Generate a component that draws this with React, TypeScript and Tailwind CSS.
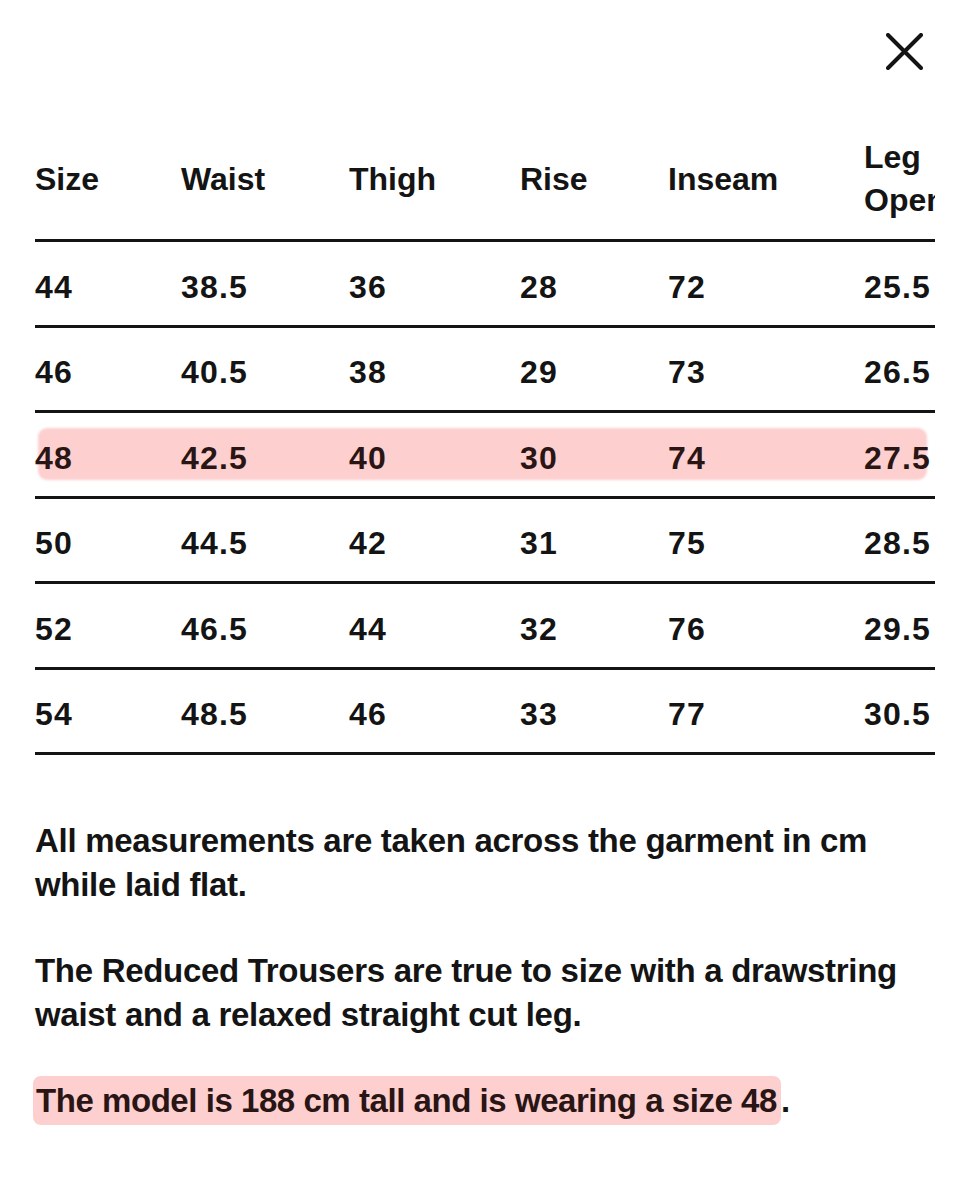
import React from "react";

const columns = ["Size", "Waist", "Thigh", "Rise", "Inseam", "Leg Opening"];

const rows = [
  ["44", "38.5", "36", "28", "72", "25.5"],
  ["46", "40.5", "38", "29", "73", "26.5"],
  ["48", "42.5", "40", "30", "74", "27.5"],
  ["50", "44.5", "42", "31", "75", "28.5"],
  ["52", "46.5", "44", "32", "76", "29.5"],
  ["54", "48.5", "46", "33", "77", "30.5"],
];

// the row that the model wears
const highlighted = "48";

const gridCols = "grid grid-cols-[146px_168px_171px_148px_196px_71px]";

const SizeGuide = () => {
  return (
    <div className="w-[972px] min-h-[1200px] bg-white text-[#141414] font-['Liberation_Sans',Arial,sans-serif] font-bold">
      {/* close */}
      <div className="flex justify-end pt-[33px] pr-[49px]">
        <button aria-label="Close" className="w-[37px] h-[37px]">
          <svg width="37" height="37" viewBox="0 0 37 37">
            <path
              d="M2 2 L35 35 M35 2 L2 35"
              stroke="#141414"
              strokeWidth="4"
              strokeLinecap="round"
            />
          </svg>
        </button>
      </div>

      <div className="ml-[35px] mt-[66px] w-[900px] overflow-hidden">
        <div className={`${gridCols} items-center pb-[17px] text-[32px] leading-[43px]`}>
          {columns.map((col) => (
            <div key={col} className="whitespace-normal">
              {col}
            </div>
          ))}
        </div>

        <div className="border-b-[3px] border-[#141414]">
          {rows.map((row) => {
            const active = row[0] === highlighted;
            return (
              <div
                key={row[0]}
                className="relative h-[85.5px] border-t-[3px] border-[#141414]"
              >
                {active && (
                  <div className="absolute left-[3px] right-[8px] top-[15px] bottom-[16px] rounded-[9px] bg-[#fdcfcf] blur-[1px]" />
                )}
                <div
                  className={`relative h-full pt-[7px] ${gridCols} items-center text-[32px] tracking-[1.2px] ${
                    active ? "text-[#2a1515]" : ""
                  }`}
                >
                  {row.map((cell, i) => (
                    <div key={i}>{cell}</div>
                  ))}
                </div>
              </div>
            );
          })}
        </div>
      </div>

      <div className="ml-[35px] mt-[64px] w-[900px] flex flex-col gap-[42px] text-[33px] leading-[44px] tracking-[-0.3px]">
        <p>
          All measurements are taken across the garment in cm
          <br />
          while laid flat.
        </p>
        <p>
          The Reduced Trousers are true to size with a drawstring
          <br />
          waist and a relaxed straight cut leg.
        </p>
        <p>
          <span className="-ml-[2px] pl-[3px] pr-[4px] py-[6px] rounded-[8px] bg-[#fdcfcf] text-[#2a1515] tracking-[-0.45px]">
            The model is 188 cm tall and is wearing a size 48
          </span>
          .
        </p>
      </div>
    </div>
  );
};

export default function App() {
  return <SizeGuide />;
}
